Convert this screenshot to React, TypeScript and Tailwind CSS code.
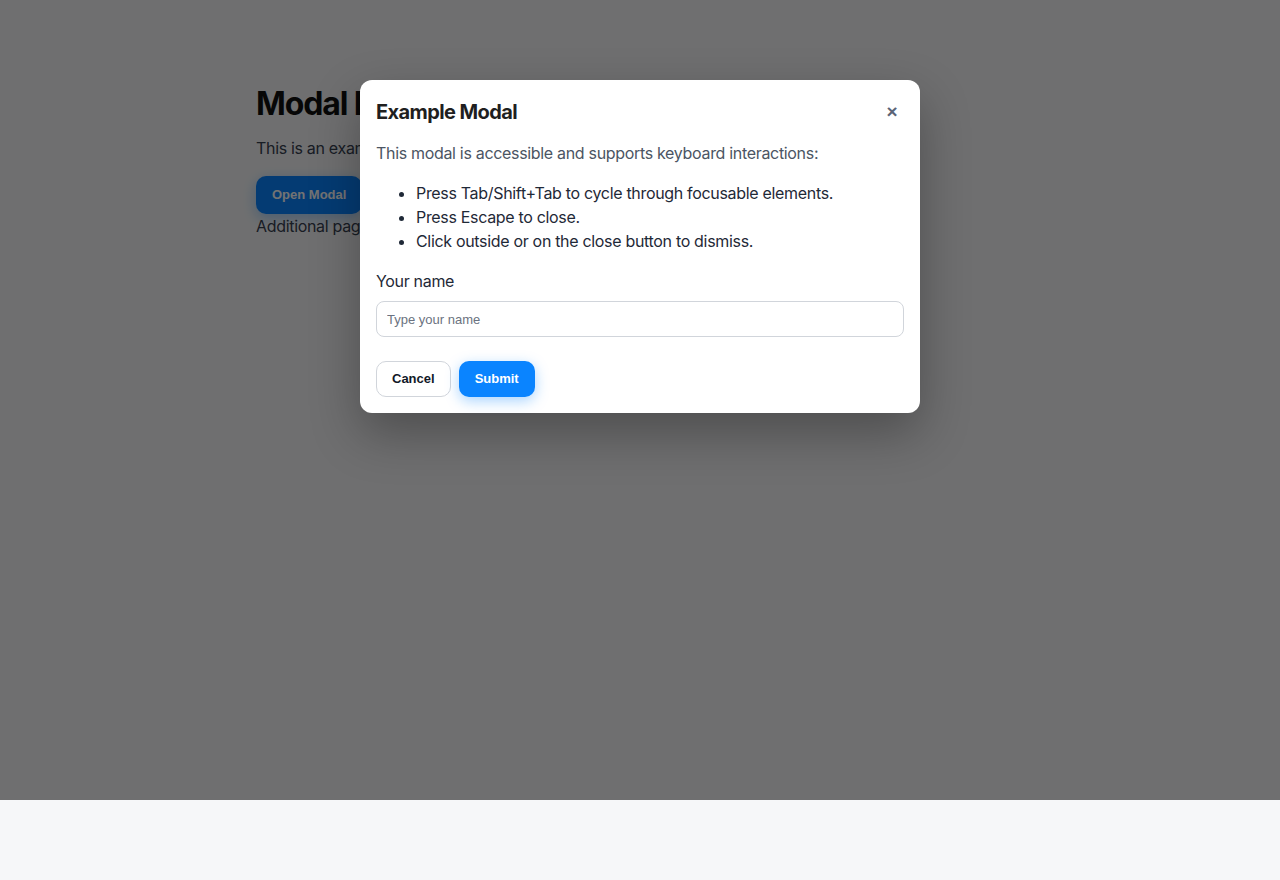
import { useState } from 'react';

const items = [
  'Press Tab/Shift+Tab to cycle through focusable elements.',
  'Press Escape to close.',
  'Click outside or on the close button to dismiss.',
];

export default function App() {
  const [open, setOpen] = useState(true);
  const [name, setName] = useState('');

  return (
    <div className="min-h-[880px] bg-[#f6f7f9] font-['Inter','Noto_Sans',sans-serif] text-[#111827]">
      <div className="relative h-[800px]">
        <main className="mx-auto max-w-3xl pt-[84px]">
          <h1 className="text-[32px] font-bold leading-[40px] tracking-[-0.035em] text-[#111]">Modal Demo</h1>
          <p className="mt-3 text-base leading-6 tracking-[-0.02em] text-[#374151]">
            This is an example page with a button that opens an accessible modal dialog.
          </p>
          <button
            type="button"
            onClick={() => setOpen(true)}
            className="mt-4 h-[38px] rounded-[10px] bg-[#0a84ff] px-4 font-['Liberation_Sans',Arial,sans-serif] text-[13px] font-bold text-white shadow-[0_4px_14px_rgba(10,132,255,0.35)]"
          >
            Open Modal
          </button>
          <p className="text-base leading-6 tracking-[-0.02em] text-[#374151]">
            Additional page content sits here beneath the trigger.
          </p>
        </main>

        {open && (
          <div
            className="absolute inset-0 flex justify-center bg-black/55 pt-20"
            onClick={() => setOpen(false)}
          >
            <div
              role="dialog"
              aria-modal="true"
              aria-labelledby="modal-title"
              onClick={(e) => e.stopPropagation()}
              className="h-fit w-[560px] rounded-xl bg-white p-4 tracking-[-0.02em] shadow-[0_20px_50px_rgba(0,0,0,0.3)]"
            >
              <div className="flex h-8 items-center justify-between">
                <h2 id="modal-title" className="text-xl font-bold tracking-[-0.03em] text-[#1f1f1f]">
                  Example Modal
                </h2>
                <button
                  type="button"
                  aria-label="Close"
                  onClick={() => setOpen(false)}
                  className="flex h-7 w-6 items-center justify-center rounded-md font-['Liberation_Sans',Arial,sans-serif] text-[19px] font-bold tracking-normal text-[#5b6477]"
                >
                  ×
                </button>
              </div>
              <p className="mt-[13px] text-base leading-6 text-[#4b5563]">
                This modal is accessible and supports keyboard interactions:
              </p>
              <ul className="mt-4 list-disc pl-10 text-base leading-6 text-[#1f2937]">
                {items.map((t) => (
                  <li key={t}>{t}</li>
                ))}
              </ul>
              <label htmlFor="name" className="mt-4 block text-base leading-6 text-[#1f2937]">
                Your name
              </label>
              <input
                id="name"
                value={name}
                onChange={(e) => setName(e.target.value)}
                placeholder="Type your name"
                className="mt-2 h-9 w-full rounded-lg border border-[#d1d5db] px-2.5 font-['Liberation_Sans',Arial,sans-serif] text-[13px] tracking-normal text-[#111827] placeholder:text-[#6b7280] focus:outline-none"
              />
              <div className="mt-6 flex gap-2 tracking-normal">
                <button
                  type="button"
                  onClick={() => setOpen(false)}
                  className="h-9 rounded-[10px] border border-[#d1d5db] bg-white px-[15px] font-['Liberation_Sans',Arial,sans-serif] text-[13px] font-bold text-[#111827]"
                >
                  Cancel
                </button>
                <button
                  type="button"
                  className="h-9 rounded-[10px] bg-[#0a84ff] px-4 font-['Liberation_Sans',Arial,sans-serif] text-[13px] font-bold text-white shadow-[0_4px_14px_rgba(10,132,255,0.35)]"
                >
                  Submit
                </button>
              </div>
            </div>
          </div>
        )}
      </div>
    </div>
  );
}
